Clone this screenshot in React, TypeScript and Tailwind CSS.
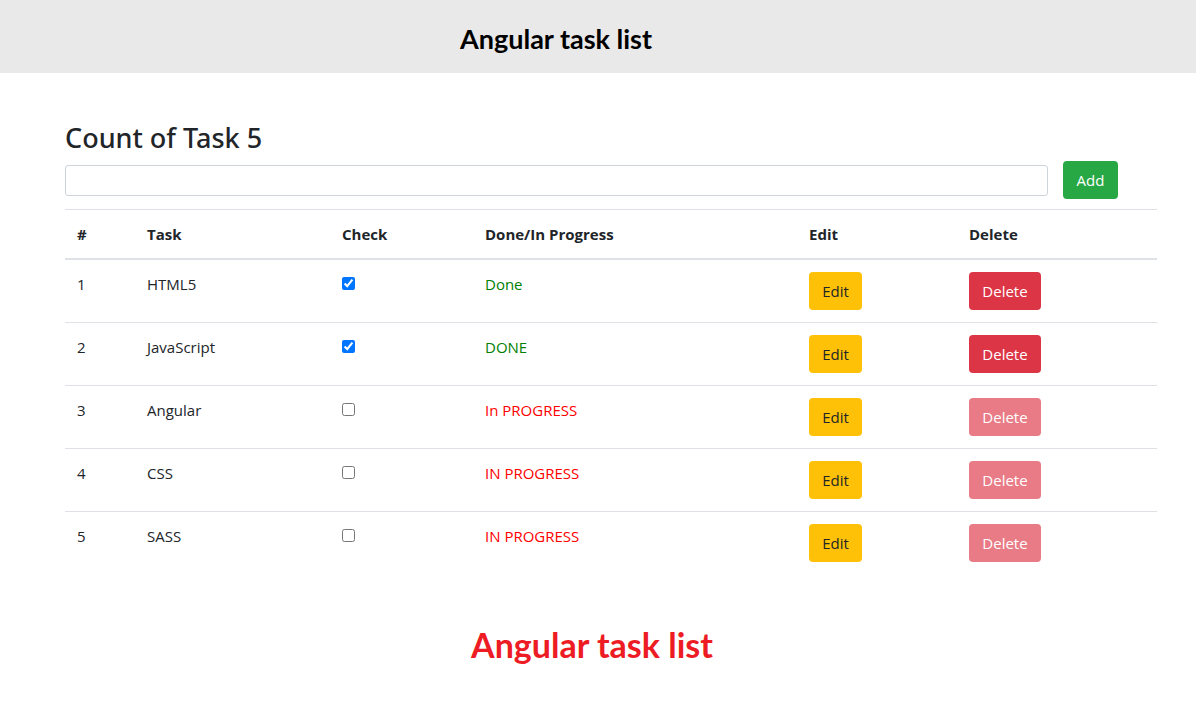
import { useState, type FormEvent } from "react";

type Task = { id: number; name: string; done: boolean; status: string };

const initialTasks: Task[] = [
  { id: 1, name: "HTML5", done: true, status: "Done" },
  { id: 2, name: "JavaScript", done: true, status: "DONE" },
  { id: 3, name: "Angular", done: false, status: "In PROGRESS" },
  { id: 4, name: "CSS", done: false, status: "IN PROGRESS" },
  { id: 5, name: "SASS", done: false, status: "IN PROGRESS" },
];

const columns = [
  { label: "#", width: "w-[70px]" },
  { label: "Task", width: "w-[195px]" },
  { label: "Check", width: "w-[143px]" },
  { label: "Done/In Progress", width: "w-[324px]" },
  { label: "Edit", width: "w-[160px]" },
  { label: "Delete", width: "w-[200px]" },
];

const button = "h-[38px] rounded-[4px] px-3 leading-6";

export default function App() {
  const [tasks, setTasks] = useState(initialTasks);
  const [draft, setDraft] = useState("");

  const addTask = (event: FormEvent) => {
    event.preventDefault();
    if (!draft.trim()) return;
    const id = Math.max(0, ...tasks.map((t) => t.id)) + 1;
    setTasks([...tasks, { id, name: draft.trim(), done: false, status: "IN PROGRESS" }]);
    setDraft("");
  };

  const toggle = (id: number) =>
    setTasks(
      tasks.map((t) =>
        t.id === id ? { ...t, done: !t.done, status: t.done ? "IN PROGRESS" : "DONE" } : t,
      ),
    );

  return (
    <div className="bg-white font-['Open_Sans',sans-serif] text-[15px] leading-6 text-[#212529]">
      <header className="bg-[#e9e9e9] pt-[21px] pr-[84px] pb-4 text-center">
        <h1 className="font-['Lato',sans-serif] text-[27px] leading-9 font-bold text-black">
          Angular task list
        </h1>
      </header>

      <main className="pt-[49px] pr-[39px] pl-[65px]">
        <h2 className="font-['Noto_Sans','Open_Sans',sans-serif] text-[27px] leading-8 font-medium">
          Count of Task {tasks.length}
        </h2>

        <form onSubmit={addTask} className="mt-[7px] flex items-center gap-[15px] pr-[39px]">
          <input
            type="text"
            aria-label="New task"
            value={draft}
            onChange={(e) => setDraft(e.target.value)}
            className="h-[31px] min-w-0 flex-1 rounded-[3px] border border-[#ced4da] px-2 text-sm"
          />
          <button type="submit" className={`${button} min-w-[55px] bg-[#28a745] text-white`}>
            Add
          </button>
        </form>

        <table className="mt-[10px] w-full table-fixed border-separate border-spacing-0 text-left">
          <thead>
            <tr>
              {columns.map((c) => (
                <th
                  key={c.label}
                  scope="col"
                  className={`${c.width} border-t border-b-2 border-t-[#dee2e6] border-b-[#dee2e6] p-3 font-bold`}
                >
                  {c.label}
                </th>
              ))}
            </tr>
          </thead>
          <tbody className="[&>tr:not(:last-child)>td]:border-b [&>tr>td]:border-[#dee2e6] [&>tr>td]:p-3 [&>tr>td]:align-top">
            {tasks.map((t) => (
              <tr key={t.id}>
                <td>{t.id}</td>
                <td>{t.name}</td>
                <td>
                  <input
                    type="checkbox"
                    aria-label={`${t.name} done`}
                    checked={t.done}
                    onChange={() => toggle(t.id)}
                    className="mt-[5px] block size-[13px]"
                  />
                </td>
                <td className={t.done ? "text-[#008000]" : "text-[#ff0000]"}>{t.status}</td>
                <td>
                  <button type="button" className={`${button} block min-w-[53px] bg-[#ffc107]`}>
                    Edit
                  </button>
                </td>
                <td>
                  <button
                    type="button"
                    disabled={!t.done}
                    onClick={() => setTasks(tasks.filter((o) => o.id !== t.id))}
                    className={`${button} block min-w-[72px] bg-[#dc3545] text-white disabled:opacity-65`}
                  >
                    Delete
                  </button>
                </td>
              </tr>
            ))}
          </tbody>
        </table>
      </main>

      <footer className="pt-[49px] pr-3 pb-8 text-center">
        <p className="font-['Lato',sans-serif] text-[34px] leading-[44px] font-bold text-[#ed1c24]">
          Angular task list
        </p>
      </footer>
    </div>
  );
}
